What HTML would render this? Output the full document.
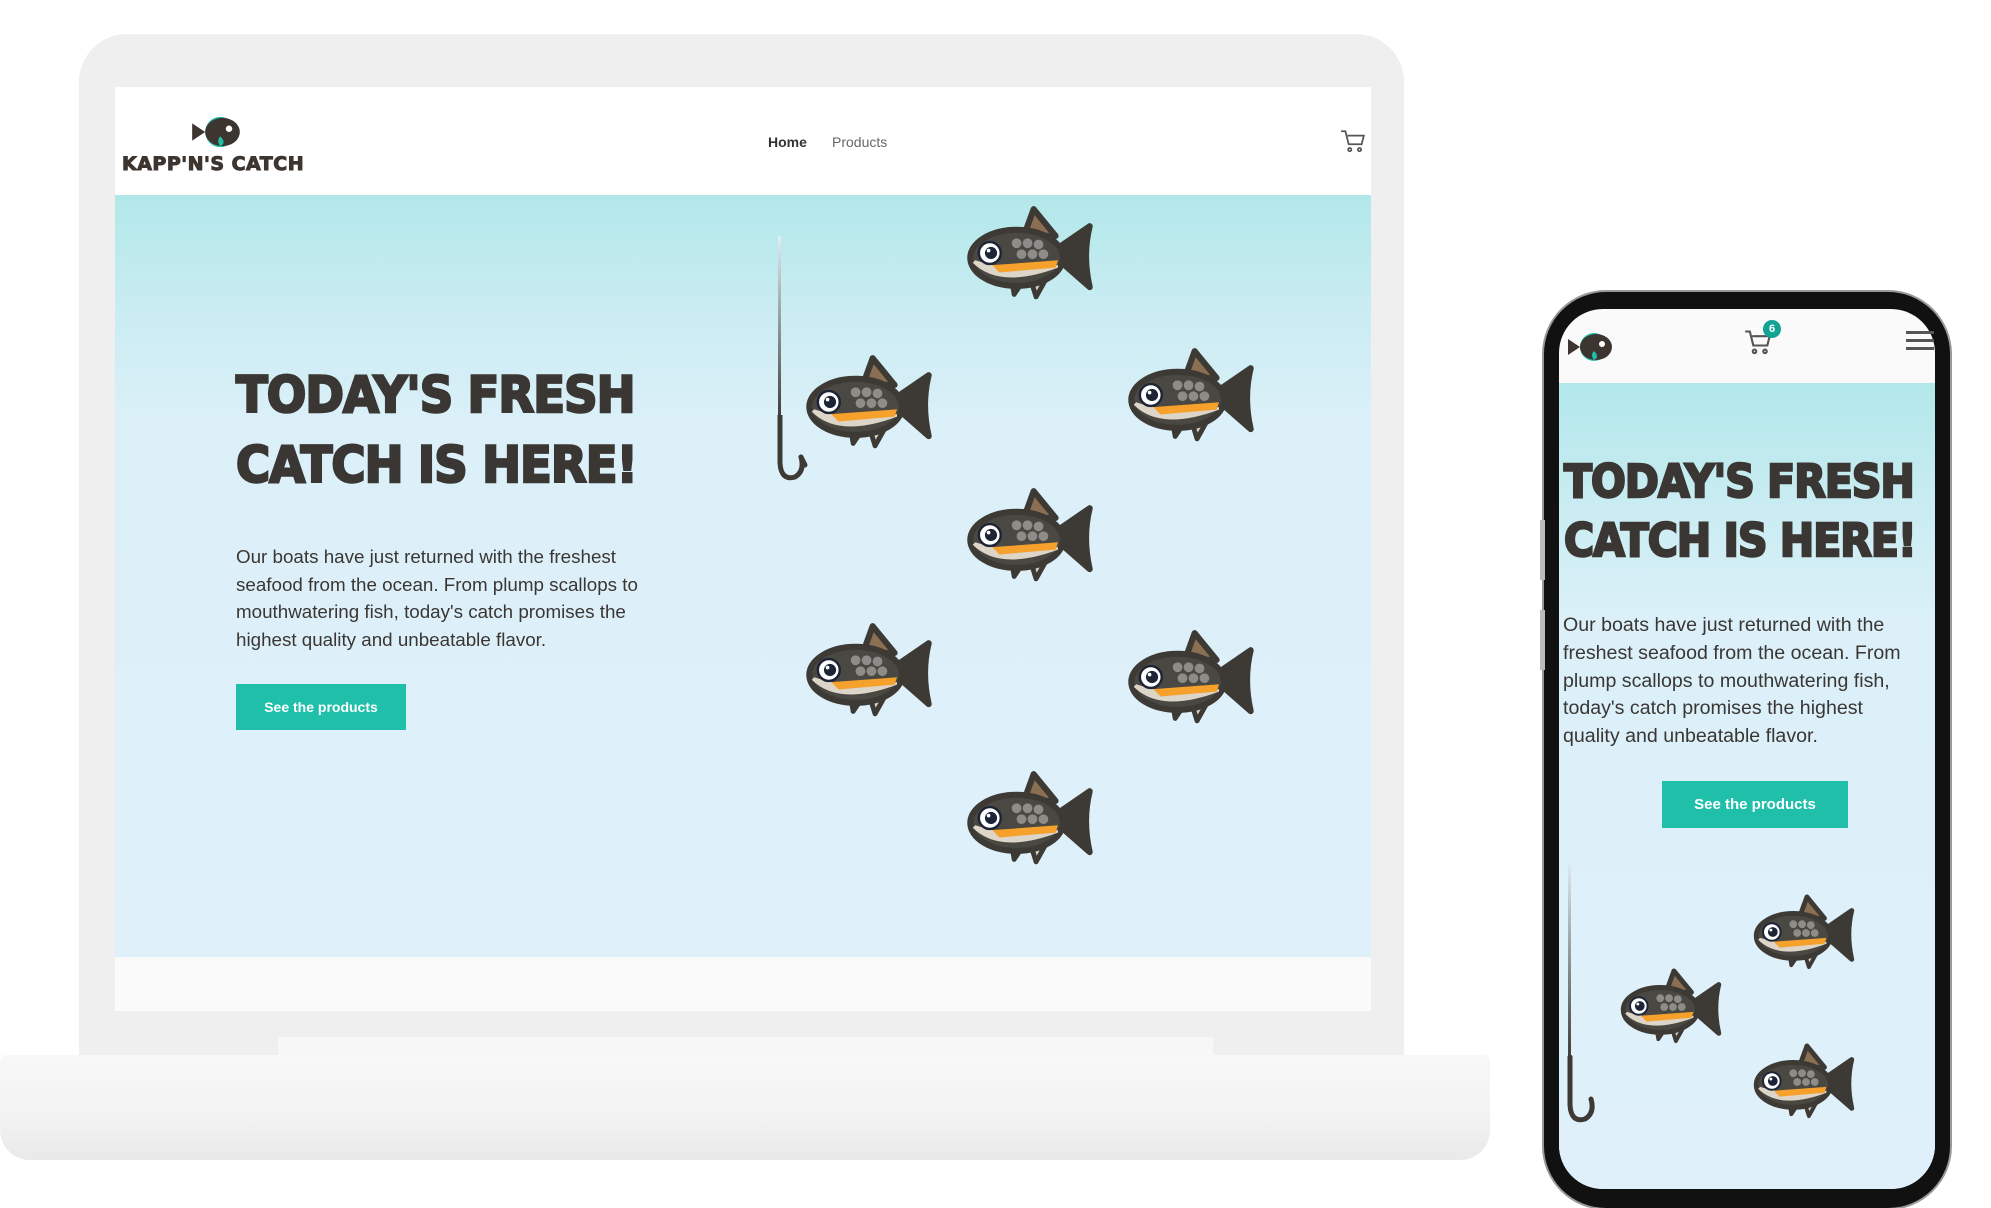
<!DOCTYPE html>
<html><head><meta charset="utf-8"><style>
body{margin:0;width:1991px;height:1202px;background:#fff;position:relative;overflow:hidden;font-family:"Liberation Sans",sans-serif}
.a{position:absolute}
.hero{background:linear-gradient(#b2e8ea 0%,#c9ecf2 15%,#dcf0f9 30%,#dff0fa 100%)}
.h1{font-family:"DejaVu Sans","Liberation Sans",sans-serif;font-weight:bold;color:#3a3633;letter-spacing:-1px;white-space:nowrap;transform-origin:left top;-webkit-text-stroke:2.5px #3a3633}
.p{color:#3a3633;white-space:nowrap}
.btn{background:#1fbfaa;color:#fff;font-weight:bold;display:flex;align-items:center;justify-content:center}
</style></head><body>
<svg width="0" height="0" style="position:absolute">
<defs>
<g id="fish">
<path d="M72 40 L104 18 Q98 42 104 68 Z" fill="#3d3a35" stroke="#3d3a35" stroke-width="5" stroke-linejoin="round"/>
<path d="M50 26 L58 4 L76 26 Z" fill="#8a6f52" stroke="#3d3a35" stroke-width="5" stroke-linejoin="round"/>
<path d="M55 60 L60 76 L70 58 Z M40 62 L42 74 L50 62 Z" fill="#d8d2c4" stroke="#3d3a35" stroke-width="4" stroke-linejoin="round"/>
<ellipse cx="44" cy="44" rx="38" ry="23" fill="#4a4843" stroke="#3d3a35" stroke-width="5"/>
<path d="M8 48 Q30 70 78 52 L78 50 Q40 56 10 46Z" fill="#dcd5c8"/>
<path d="M24 50 L78 46 L76 52 L30 56Z" fill="#f5a12c"/>
<g fill="#8e8c88"><circle cx="44" cy="32" r="4"/><circle cx="53" cy="32" r="4"/><circle cx="62" cy="33" r="4"/><circle cx="48" cy="41" r="4"/><circle cx="57" cy="41" r="4"/><circle cx="66" cy="41" r="4"/></g>
<circle cx="22" cy="40" r="9" fill="#fff" stroke="#1c2436" stroke-width="2"/>
<circle cx="23" cy="40" r="5" fill="#1c2436"/>
<circle cx="21" cy="38" r="1.5" fill="#fff"/>
</g>
<g id="logo">
<path d="M2 6 L14 14 L2 22 Z" fill="#3d3530"/>
<circle cx="30" cy="14" r="14" fill="#1fbfaa" transform="translate(-2,0)"/>
<ellipse cx="30" cy="14" rx="16" ry="13" fill="#3d3530"/>
<circle cx="36" cy="11" r="3" fill="#fff"/>
<path d="M28 18 Q34 24 28 27 Q24 22 28 18Z" fill="#1fbfaa"/>
</g>
</defs></svg>

<!-- laptop -->
<div class="a" style="left:79px;top:34px;width:1325px;height:1030px;background:#efefef;border-radius:48px 48px 0 0"></div>
<div class="a" style="left:0;top:1055px;width:1490px;height:105px;background:linear-gradient(#f8f8f8,#f2f2f2 60%,#e9e9e9);border-radius:6px 6px 30px 30px"></div>
<div class="a" style="left:278px;top:1037px;width:935px;height:20px;background:#f7f7f7"></div>
<div class="a" style="left:115px;top:87px;width:1256px;height:924px;background:#fafafa"></div>
<div class="a" style="left:115px;top:87px;width:1256px;height:108px;background:#fff"></div>
<svg class="a" style="left:190px;top:116px" width="52" height="32" viewBox="0 0 48 28"><use href="#logo"/></svg>
<div class="a" style="left:122px;top:153px;font-family:'DejaVu Sans';font-weight:bold;font-size:19px;color:#3d3530;letter-spacing:0.5px;-webkit-text-stroke:1px #3d3530">KAPP'N'S CATCH</div>
<div class="a" style="left:768px;top:134px;font-size:14px;font-weight:bold;color:#333">Home</div>
<div class="a" style="left:832px;top:134px;font-size:14px;color:#666">Products</div>
<svg class="a" style="left:1340px;top:128px" width="26" height="26" viewBox="0 0 24 24" fill="none" stroke="#555" stroke-width="1.6"><path d="M1 3h4l3 12h12l2-8H7"/><circle cx="9" cy="20" r="1.5"/><circle cx="18" cy="20" r="1.5"/></svg>
<div class="a hero" style="left:115px;top:195px;width:1256px;height:762px"></div>
<div class="a h1" style="left:236px;top:360px;font-size:50px;line-height:70px;transform:scaleX(0.93)">TODAY'S FRESH<br>CATCH IS HERE!</div>
<div class="a p" style="left:236px;top:543px;font-size:18.8px;line-height:27.5px">Our boats have just returned with the freshest<br>seafood from the ocean. From plump scallops to<br>mouthwatering fish, today's catch promises the<br>highest quality and unbeatable flavor.</div>
<div class="a btn" style="left:236px;top:684px;width:170px;height:46px;font-size:14px">See the products</div>
<div class="a" style="left:778px;top:236px;width:3px;height:185px;background:linear-gradient(#dfeef4,#3d3a35)"></div>
<svg class="a" style="left:771px;top:415px" width="40" height="72" viewBox="0 0 40 72" fill="none" stroke="#3d3a35" stroke-width="5" stroke-linecap="round"><path d="M9 0 V48 Q10 66 24 62 Q34 56 30 42"/><path d="M30 42 L34 50"/></svg>
<svg class="a" style="left:963px;top:204px" width="134" height="98" viewBox="0 0 110 80"><use href="#fish"/></svg>
<svg class="a" style="left:802px;top:353px" width="134" height="98" viewBox="0 0 110 80"><use href="#fish"/></svg>
<svg class="a" style="left:1124px;top:346px" width="134" height="98" viewBox="0 0 110 80"><use href="#fish"/></svg>
<svg class="a" style="left:963px;top:486px" width="134" height="98" viewBox="0 0 110 80"><use href="#fish"/></svg>
<svg class="a" style="left:802px;top:621px" width="134" height="98" viewBox="0 0 110 80"><use href="#fish"/></svg>
<svg class="a" style="left:1124px;top:628px" width="134" height="98" viewBox="0 0 110 80"><use href="#fish"/></svg>
<svg class="a" style="left:963px;top:769px" width="134" height="98" viewBox="0 0 110 80"><use href="#fish"/></svg>

<!-- phone -->
<div class="a" style="left:1544px;top:292px;width:406px;height:916px;background:#111;border-radius:62px;box-shadow:0 0 0 2px #999"></div>
<div class="a" style="left:1540px;top:520px;width:5px;height:60px;background:#bbb"></div>
<div class="a" style="left:1540px;top:610px;width:5px;height:60px;background:#bbb"></div>
<div class="a" style="left:1559px;top:309px;width:376px;height:880px;background:#fafafa;border-radius:44px;overflow:hidden">
 <div class="a hero" style="left:0;top:74px;width:376px;height:806px"></div>
</div>
<svg class="a" style="left:1566px;top:332px" width="48" height="30" viewBox="0 0 48 28"><use href="#logo"/></svg>
<svg class="a" style="left:1744px;top:328px" width="28" height="28" viewBox="0 0 24 24" fill="none" stroke="#555" stroke-width="1.8"><path d="M1 3h4l3 12h12l2-8H7"/><circle cx="9" cy="20" r="1.5"/><circle cx="18" cy="20" r="1.5"/></svg>
<div class="a" style="left:1763px;top:320px;width:18px;height:18px;border-radius:50%;background:#12a394;color:#fff;font-size:11px;font-weight:bold;text-align:center;line-height:18px">6</div>
<div class="a" style="left:1906px;top:331px;width:28px;height:3px;background:#555;box-shadow:0 8px 0 #555,0 16px 0 #555"></div>
<div class="a h1" style="left:1564px;top:452px;font-size:45px;line-height:59px;transform:scaleX(0.91)">TODAY'S FRESH<br>CATCH IS HERE!</div>
<div class="a p" style="left:1563px;top:612px;font-size:19.6px;line-height:27.8px">Our boats have just returned with the<br>freshest seafood from the ocean. From<br>plump scallops to mouthwatering fish,<br>today's catch promises the highest<br>quality and unbeatable flavor.</div>
<div class="a btn" style="left:1662px;top:781px;width:186px;height:47px;font-size:15px">See the products</div>
<div class="a" style="left:1568px;top:861px;width:3px;height:200px;background:linear-gradient(#dfeef4,#3d3a35)"></div>
<svg class="a" style="left:1561px;top:1055px" width="40" height="76" viewBox="0 0 40 72" fill="none" stroke="#3d3a35" stroke-width="5" stroke-linecap="round"><path d="M9 0 V48 Q10 66 24 62 Q34 56 30 42"/></svg>
<svg class="a" style="left:1750px;top:893px" width="108" height="78" viewBox="0 0 110 80"><use href="#fish"/></svg>
<svg class="a" style="left:1617px;top:967px" width="108" height="78" viewBox="0 0 110 80"><use href="#fish"/></svg>
<svg class="a" style="left:1750px;top:1042px" width="108" height="78" viewBox="0 0 110 80"><use href="#fish"/></svg>
</body></html>
